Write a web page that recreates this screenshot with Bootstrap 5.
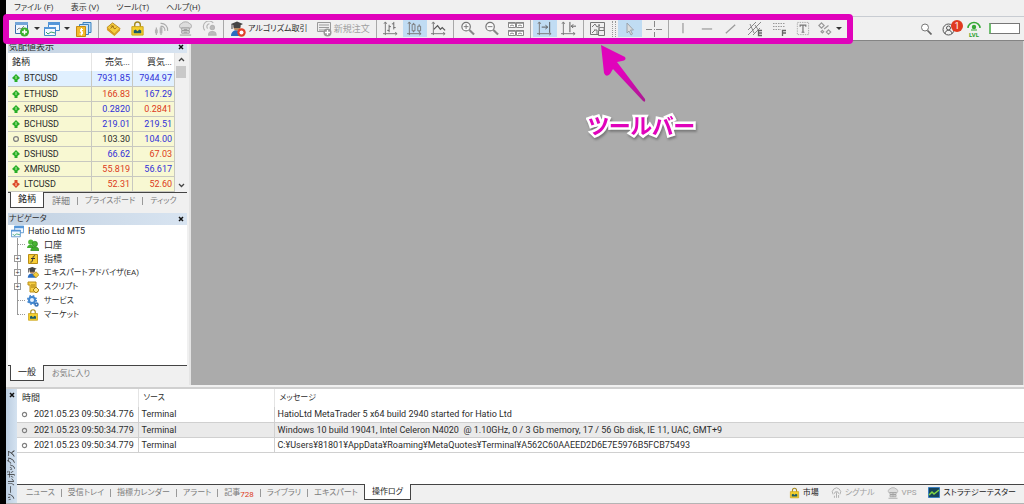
<!DOCTYPE html>
<html lang="ja">
<head>
<meta charset="utf-8">
<meta name="viewport" content="width=device-width, initial-scale=1">
<title>Hatio Ltd MT5</title>
<link href="https://cdn.jsdelivr.net/npm/bootstrap@5.3.0/dist/css/bootstrap.min.css" rel="stylesheet">
<style>
:root{--line:#d0d0d0;--mag:#e003bb}
body{font-family:Roboto,"Noto Sans CJK JP",sans-serif;font-size:9px;line-height:14px;color:#2c2c2c;background:#000;font-feature-settings:"palt";padding-left:6px}
button,input{font:inherit;color:inherit;font-feature-settings:inherit}
svg{display:block;flex:none}
.frame{min-height:100vh;background:#f0f0f0}
.kana{font-size:8px!important}
.menubar{height:16px;padding-left:8px;gap:17px}
.menubar a{color:#333;text-decoration:none}
.toolbar{height:25px;border-top:1px solid #c8ccd2;border-bottom:1px solid #848484}
.tools{padding-left:6px}
.tool{border:0;background:none;padding:0;width:24px;height:17px;display:flex;align-items:center;justify-content:center}
.tool.split{width:30px;gap:4px}
.tool.pressed{background:#c0dcf3}
.tool.labeled{width:auto;gap:2px;padding:0 4px;white-space:nowrap}
.dim{color:#a0a0a0}
.caret{width:0;border:3px solid transparent;border-top:3px solid #333;border-bottom:0}
.sep{width:1px;height:18px;background:#a8a8a8;margin:0 2px}
.grip{width:4px;height:16px;margin:0 2px;border-left:1px dotted #999;border-right:1px dotted #999}
.marker{left:3px;top:14px;width:850px;height:30px;border:6px solid var(--mag);border-radius:4px;pointer-events:none;z-index:3}
.status-tools{padding-right:4px}
.status-tools .tool{width:16px}
.count{left:9px;top:-2px;width:12px;height:12px;border-radius:6px;background:#e03a20;color:#fff;line-height:12px;text-align:center}
.quick{width:31px;height:11px;border:1px solid #777;border-left:2px solid #6fbf6f;background:#fff;padding:0 2px}
.side{width:185px;background:#f0f0f0;border-right:2px solid #e4e4e4;padding:0 2px 2px}
.canvas{background:#ababab;border-right:1px solid #d8d8d8}
.caption{height:12px;background:linear-gradient(90deg,#c3d2e2,#d8e4f1);font-size:9px;line-height:12px;padding:0 1px;font-weight:400}
.cls{border:0;background:none;padding:0;width:10px;height:10px;display:grid;place-items:center}
.pane{background:#fff}
table{border-collapse:collapse;width:100%;table-layout:fixed}
td,th{padding:0;font-weight:400;white-space:nowrap}
.quotes th{height:18px;border-right:1px solid #e4e4e4}
.quotes td{height:15px;line-height:14px;border-right:1px solid #c8c8c0;border-bottom:1px solid #c8c8c0;background:#f8f8d2}
.quotes tr.sel td{background:#e0f0ff}
.quotes th:not(:first-child),.quotes td:not(:first-child){text-align:right;padding-right:2px}
.quotes td:first-child,.quotes th:first-child{padding-left:4px}
.quotes td:first-child svg{display:inline-block;margin-right:4px;vertical-align:-1px}
.quotes .b{color:#3030d8}.r,.quotes .r{color:#dc3a20}
.scroller{width:12px;background:#f0f0f0}
.thumb{width:10px;height:12px;background:#c9c9c9}
.tabs{border-top:1px solid #444;height:17px;color:#7c7c7c;padding-left:2px}
.tabs button{border:0;background:none;padding:0 7px;height:14px;line-height:14px;white-space:nowrap}
.tabs button+button:not(.on){border-left:1px solid #999;height:8px;line-height:8px}
.tabs .on+button:not(.on){border-left-color:transparent}
.tabs button.on{background:#fff;color:#222;border:1px solid #444;border-top:0;height:16px;margin-top:-1px;align-self:flex-start}
.tabs.bottom{height:19px;padding-left:3px;padding-bottom:3px}
.tabs.bottom .strip{height:15px}
.tabs.bottom button{padding:0 6px}
.tabs.bottom button.on{padding:0 7px}
.tabs sub{font-size:8px;bottom:-2px;line-height:1}
.tree{margin:0;padding:0 0 0 3px;list-style:none;height:140px}
.tree li{display:flex;align-items:center;height:14px;gap:5px}
.tree .root{height:13px;gap:4px}
.kids{list-style:none;margin:0 0 0 6px;padding:0;background:linear-gradient(#999,#999) 0 0/1px 77px no-repeat}
.kids li::before{content:"";width:8px;border-top:1px dotted #999;flex:none;margin-right:-3px}
.kids li.more::before{content:"+";width:7px;height:7px;border:1px solid #999;background:#fff;font:7px/5px "Liberation Sans",sans-serif;text-align:center;margin:0 1px 0 -3px}
.dock{border-top:2px solid #d0d0d0;margin-top:2px;height:117px;border-bottom:1px solid #b4b4b4}
.spine{width:11px;background:linear-gradient(90deg,#bccee1,#d4e2f0);padding:1px 0 2px}
.spine span{writing-mode:vertical-rl;text-orientation:sideways;transform:rotate(180deg);line-height:11px;white-space:nowrap}
.log th{height:18px;padding-left:5px;border-right:1px solid #e4e4e4}
.log td{height:15px;line-height:14px;border-right:1px solid var(--line);border-bottom:1px solid var(--line);padding-left:3px;white-space:pre}
.log td:first-child{padding-left:4px}
.log td:first-child svg{display:inline-block;margin-right:6px}
.log tr.alt td{background:#eaeaea}
.log th:last-child,.log td:last-child{border-right:0}
.links{gap:12px}
.links a{color:#222;text-decoration:none;display:flex;align-items:center;gap:3px}
.links a.dim{color:#a0a0a0}
.note{left:588px;top:106px;font-family:"Noto Sans CJK JP",sans-serif;font-weight:700;font-size:22px;line-height:36px;color:var(--mag);-webkit-text-stroke:5px #fff;paint-order:stroke fill;filter:drop-shadow(1px 2px 1px #777);z-index:3;white-space:nowrap}
.pointer{left:596px;top:43px;z-index:3}
</style>
</head>
<body>
<svg width="0" height="0" class="position-absolute" fill="none">
<defs>
<linearGradient id="fade" x1="0" y1="0" x2="0" y2="1"><stop offset=".5" stop-color="#e003bb"/><stop offset="1" stop-color="#a81c90"/></linearGradient>
<symbol id="up" viewBox="0 0 8 8"><path d="M4 0 8 4 5.500 6V8h-3V6L0 4z" fill="#28ae28"/><path d="M4 2v3" stroke="#b8f0a0" stroke-width="1"/></symbol>
<symbol id="down" viewBox="0 0 8 8"><path d="M4 8 8 4 5.500 2.500V0h-3v2.500L0 4z" fill="#dc4a2a"/><path d="M4 3v3" stroke="#ffd0b0"/></symbol>
<symbol id="ring" viewBox="0 0 8 8"><circle cx="4" cy="4" r="2.400" fill="none" stroke="#808080" stroke-width="1.300"/></symbol>
<symbol id="x" viewBox="0 0 6 6"><path d="M1 1l4 4M5 1 1 5" stroke="#111" stroke-width="1.500"/></symbol>
<symbol id="bag" viewBox="0 0 16 16"><path d="M5 7V4a3 3 0 0 1 6 0v3" fill="none" stroke="#a58a20" stroke-width="1.500"/><path d="M2 6h12v9H2z" fill="#f4cf2c" stroke="#c9a21a"/><path d="M4 13v-3l2-1 2 2 2-2 2 1v3z" fill="#1c5c66"/></symbol>
<symbol id="signal" viewBox="0 0 16 16"><path d="M7 2.500a7 7 0 0 1 7.500 8M8 5.500a4 4 0 0 1 3.500 5M2.500 7v8M7.500 5v10" fill="none" stroke="#aaa" stroke-width="1.200"/><path d="M1 9h3v4H1zM6 7h3v6H6z" fill="#b4b4b4"/></symbol>
<symbol id="antenna" viewBox="0 0 16 16"><g fill="none" stroke="#aaa" stroke-width="1.300"><path d="M3 10a6 6 0 1 1 10 0M5 9a3 3 0 1 1 6 0M8 7v8M5 12v3M11 11v4"/></g></symbol>
<symbol id="cloud" viewBox="0 0 16 16"><path d="M2.500 7.500a3 3 0 0 1 1.500-5 4.500 3 0 0 1 8 0 3 3 0 0 1 1.500 5z" fill="#ddd" stroke="#aaa"/><path d="M4 7.500h8v2.500H4zM4 10.500h8V13H4z" fill="#eee" stroke="#999"/><path d="M2 15h12M6 9h4M6 12h4" stroke="#999"/></symbol>
<symbol id="person" viewBox="0 0 16 16"><g fill="none" stroke="#b4b4b4" stroke-width="1.200"><path d="M3 10a6 6 0 1 1 9-8M6 8a3 3 0 0 1 2-5"/><circle cx="11" cy="7" r="2.300" fill="#bbb"/><path d="M7 15c0-5 8-5 8 0z" fill="#bbb"/></g></symbol>
<symbol id="advisor" viewBox="0 0 16 16"><path d="M1 15c0-7 10-8 11 0z" fill="#2a6cc0"/><circle cx="7" cy="6" r="3.500" fill="#b48a62"/><path d="M1 3l6-2.500L13 3 7 6z" fill="#444"/><path d="M4 4h6v2.500H4zM2 3v5" fill="#444" stroke="#444"/></symbol>
<symbol id="chart" viewBox="0 0 16 16"><path d="M1.500 1.500h12v11h-12z" fill="#eef6ff" stroke="#3b6ea8"/><path d="M1 1h13v3H1z" fill="#73a5d8"/><path d="M3 9l2-2 2 1 3-3" stroke="#888" fill="none"/><circle cx="10.500" cy="11" r="4.500" fill="#3bb02e"/><path d="M8 11h5M10.500 8.500v5" stroke="#fff" stroke-width="1.500"/></symbol>
<symbol id="windows" viewBox="0 0 16 16"><path d="M4.500 1.500h11v8h-11z" fill="#f3f9ff" stroke="#4a8bc8"/><path d="M4 1h12v3H4z" fill="#5596d8"/><path d="M.500 6.500h11v8H.500z" fill="#f3f9ff" stroke="#4a8bc8"/><path d="M0 6h12v2H0z" fill="#5596d8"/><path d="M2 11l2 2 3-2 4 1" stroke="#35a06c" fill="none"/></symbol>
<symbol id="purse" viewBox="0 0 16 16"><path d="M7 1.500h8v10H7z" fill="#b9daf5" stroke="#3c82bf"/><path d="M3.500 3.500h9v10h-9z" fill="#cae4f8" stroke="#3c82bf"/><path d="M.500 5.500h9v10h-9z" fill="#f2bb2c" stroke="#c58a12"/><path d="M7 8.500H4.500v2H6.500V13H3.500M5.500 7v7.500" stroke="#fff" fill="none"/></symbol>
<symbol id="book" viewBox="0 0 16 16"><path d="M1 7l6-5 8 6-6 6z" fill="#f5cd3c" stroke="#b8861a"/><path d="M1 7l8 7v2L1 9.500zM9 14l6-6v2l-6 6z" fill="#d99a20"/><path d="M5 6c2-2 3 0 3 1s2 2 3 0M5 8l3-3" stroke="#8a5c10" fill="none"/></symbol>
<symbol id="order" viewBox="0 0 16 16"><path d="M1.500 1.500h13v9h-13z" fill="#eee" stroke="#999"/><path d="M3 4h10M3 6.500h10M3 9h6" stroke="#999"/><circle cx="11.500" cy="11.500" r="4" fill="#999"/><path d="M9 11.500h5M11.500 9v5" stroke="#fff" stroke-width="1.300"/></symbol>
<symbol id="axes" viewBox="0 0 16 16"><path d="M2.500 1v14M0 13.500h15M1 3l1.500-2L4 3M13 12l2 1.500L13 15" stroke="#777" fill="none"/></symbol>
<symbol id="zoom" viewBox="0 0 16 16"><circle cx="6.500" cy="6" r="4.500" fill="#fafafa" stroke="#777" stroke-width="1.300"/><path d="M10 9.500l5 5" stroke="#888" stroke-width="2.200"/><path d="M4 6h5" stroke="#777"/></symbol>
<symbol id="group" viewBox="0 0 16 16"><circle cx="5" cy="4" r="3.500" fill="#4fbb38"/><path d="M0 12c0-6 9-6 9 0z" fill="#3fae2c"/><circle cx="10.500" cy="6.500" r="3.500" fill="#48b433" stroke="#277b1c" stroke-width=".800"/><path d="M5 15.500c0-7 11-7 11 0z" fill="#3fae2c" stroke="#257b19" stroke-width=".800"/></symbol>
</defs>
</svg>

<div class="frame d-flex flex-column">
<nav class="menubar kana d-flex align-items-center"><a href="#">ファイル (F)</a><a href="#">表示 (V)</a><a href="#">ツール(T)</a><a href="#">ヘルプ(H)</a></nav>

<header class="toolbar d-flex align-items-center justify-content-between">
<div class="tools d-flex align-items-center">
<button class="tool split" aria-label="新規チャート"><svg width="16" height="16"><use href="#chart"/></svg><i class="caret"></i></button>
<button class="tool split" aria-label="チャート一覧"><svg width="16" height="16"><use href="#windows"/></svg><i class="caret"></i></button>
<button class="tool" aria-label="銘柄"><svg width="16" height="16"><use href="#purse"/></svg></button>
<span class="sep"></span>
<button class="tool" aria-label="履歴"><svg width="15" height="15"><use href="#book"/></svg></button>
<button class="tool" aria-label="マーケット"><svg width="15" height="15"><use href="#bag"/></svg></button>
<button class="tool" aria-label="シグナル"><svg width="15" height="15"><use href="#signal"/></svg></button>
<button class="tool" aria-label="VPS"><svg width="15" height="15"><use href="#cloud"/></svg></button>
<button class="tool" aria-label="コミュニティ"><svg width="15" height="15"><use href="#person"/></svg></button>
<span class="sep"></span>
<button class="tool labeled kana"><svg width="16" height="16" viewBox="0 0 16 16"><use href="#advisor"/><circle cx="11.500" cy="11.500" r="4.200" fill="#e0402a"/><circle cx="11.500" cy="11.500" r="2" fill="#fff"/></svg>アルゴリズム取引</button>
<button class="tool labeled dim"><svg width="16" height="16"><use href="#order"/></svg>新規注文</button>
<span class="sep"></span>
<button class="tool" aria-label="バー"><svg width="15" height="15" viewBox="0 0 16 16"><use href="#axes"/><path d="M6.500 4v8M4.500 10h2M6.500 6h2M11.500 1v8M9.500 3h2M11.500 7h2" stroke="#666"/></svg></button>
<button class="tool pressed" aria-label="ローソク足"><svg width="15" height="15" viewBox="0 0 16 16"><use href="#axes"/><path d="M5.500 3.500h3v7h-3zM11.500 5.500h3v5h-3zM7 2v1.500M7 10.500V12M13 3.500v2M13 10.500V12" stroke="#777" fill="none"/></svg></button>
<button class="tool" aria-label="ライン"><svg width="15" height="15" viewBox="0 0 16 16"><use href="#axes"/><path d="M3 9l4-4 3 4 2-2 3 3" stroke="#555" fill="none" stroke-width="1.300"/></svg></button>
<span class="sep"></span>
<button class="tool" aria-label="拡大"><svg width="15" height="15" viewBox="0 0 16 16"><use href="#zoom"/><path d="M6.500 3.500v5" stroke="#777"/></svg></button>
<button class="tool" aria-label="縮小"><svg width="15" height="15"><use href="#zoom"/></svg></button>
<button class="tool" aria-label="整列"><svg width="16" height="16" viewBox="0 0 16 16"><path d="M.500 1.500h7v5h-7zM8.500 1.500h7v5h-7zM.500 9.500h7v5h-7zM8.500 9.500h7v5h-7z" fill="#fff" stroke="#888"/><path d="M0 2h7M8 2h8M0 10h7M8 10h8" stroke="#888" stroke-width="1.500"/><path d="M2 5l2-1 2 1M10 5l2-1 2 1M2 13l2-1 2 1M10 13l2-1 2 1" stroke="#888" fill="none"/></svg></button>
<span class="sep"></span>
<button class="tool pressed" aria-label="自動スクロール"><svg width="15" height="15" viewBox="0 0 16 16"><use href="#axes"/><path d="M13.500 1v11M5 6.500h6M9 4.500l2.500 2L9 8.500" stroke="#555" fill="none"/></svg></button>
<button class="tool" aria-label="チャートシフト"><svg width="15" height="15" viewBox="0 0 16 16"><use href="#axes"/><path d="M9.500 1v11M11 5.500h5M13 3.500l-2 2 2 2" stroke="#555" fill="none"/></svg></button>
<span class="sep"></span>
<button class="tool" aria-label="テンプレート"><svg width="17" height="16" viewBox="0 0 17 16"><path d="M1.500 1.500h14v12h-14zM3 6l3-3 2 3 3-2M3 12l3-3M5 9h3v5M10 3v6" fill="none" stroke="#777"/><path d="M9.500 9.500h6v5h-6z" fill="#eee" stroke="#777"/><path d="M10 9V6.500h5V9" fill="none" stroke="#888"/></svg></button>
<span class="grip"></span>
<button class="tool pressed" aria-label="カーソル"><svg width="12" height="14" viewBox="0 0 12 14"><path d="M3 1v10l2-2 2 4 1.500-1-2-4h3z" fill="#ddd" stroke="#9aa3ac"/></svg></button>
<button class="tool" aria-label="十字線"><svg width="16" height="16" viewBox="0 0 16 16"><path d="M0 8.500h6M10 8.500h6M8.500 0v6M8.500 11v5M8 8.500h1" stroke="#888"/></svg></button>
<span class="sep"></span>
<button class="tool" aria-label="垂直線"><svg width="15" height="15" viewBox="0 0 16 16"><path d="M8.500 2v11" stroke="#999" stroke-width="1.300"/></svg></button>
<button class="tool" aria-label="水平線"><svg width="15" height="15" viewBox="0 0 16 16"><path d="M3 8.500h11" stroke="#999" stroke-width="1.300"/></svg></button>
<button class="tool" aria-label="トレンドライン"><svg width="15" height="15" viewBox="0 0 16 16"><path d="M3 13l10-9" stroke="#999" stroke-width="1.300"/></svg></button>
<button class="tool" aria-label="チャネル"><svg width="16" height="16" viewBox="0 0 16 16"><path d="M1 9l8-8M1 14 14 1M6 14l7-7M3 3l4 9M8 4l4 6" stroke="#888" fill="none"/><path d="M15 9.500h-3.500v5H15M11.500 12H15" stroke="#666" stroke-width="1.300" fill="none"/></svg></button>
<button class="tool" aria-label="フィボナッチ"><svg width="16" height="16" viewBox="0 0 16 16"><path d="M2 2.500h12M2 5.500h12M2 8.500h8" stroke="#999" stroke-dasharray="1.500 1"/><path d="M11.500 15V9.500H15M11.500 12H15" stroke="#666" stroke-width="1.300" fill="none"/></svg></button>
<button class="tool" aria-label="テキスト"><svg width="15" height="15" viewBox="0 0 16 16"><path d="M2.500 1.500h12v13h-12z" stroke="#aaa" stroke-dasharray="1.500 1" fill="none"/><path d="M5.500 6V4.500h6V6M8.500 5v7M7 12h3" stroke="#777" stroke-width="1.300" fill="none"/></svg></button>
<button class="tool split" aria-label="オブジェクト"><svg width="14" height="14" viewBox="0 0 16 16"><path d="M4 1l3 3-3 3-3-3zM12 9l2.500 2.500L12 14l-2.500-2.500zM5 9.500l1.500 1.500L5 12.500 3.500 11zM7 8l5-4" stroke="#999" stroke-width="1.400" fill="none"/></svg><i class="caret"></i></button>
</div>
<div class="status-tools d-flex align-items-center gap-2">
<button class="tool" aria-label="検索"><svg width="12" height="12" viewBox="0 0 12 12"><circle cx="5" cy="4.500" r="3.500" fill="#fff" stroke="#777"/><path d="M7.500 7.500l4 4" stroke="#666" stroke-width="1.700"/></svg></button>
<button class="border-0 bg-transparent p-0 position-relative me-1" aria-label="アカウント"><svg width="13" height="14" viewBox="0 0 13 14"><circle cx="6.500" cy="7.500" r="5.500" fill="none" stroke="#555"/><circle cx="6.500" cy="6" r="2" fill="none" stroke="#555"/><path d="M3 12c0-5 7-5 7 0" fill="none" stroke="#555"/></svg><span class="count position-absolute">1</span></button>
<svg width="14" height="16" viewBox="0 0 14 16" role="img" aria-label="LVL"><path d="M1 7a6 5.500 0 0 1 12 0" fill="none" stroke="#35a835" stroke-width="1.500"/><circle cx="7" cy="6" r="2.200" fill="#35a835"/><path d="M4 9h6" stroke="#35a835"/><text x="7" y="15.500" font-size="6" font-weight="700" text-anchor="middle" fill="#2da02d">LVL</text></svg>
<input class="quick" type="text" aria-label="クイック入力">
</div>
</header>

<main class="d-flex flex-grow-1">
<aside class="side flex-shrink-0">
<section class="mb-1">
<h2 class="caption m-0 d-flex justify-content-between align-items-center">気配値表示<button class="cls" aria-label="閉じる"><svg width="6" height="6"><use href="#x"/></svg></button></h2>
<div class="pane d-flex">
<table class="quotes">
<colgroup><col><col style="width:41px"><col style="width:42px"></colgroup>
<thead><tr><th>銘柄</th><th>売気...</th><th>買気...</th></tr></thead>
<tbody>
<tr class="sel"><td><svg width="8" height="8"><use href="#up"/></svg>BTCUSD</td><td class="b">7931.85</td><td class="b">7944.97</td></tr>
<tr><td><svg width="8" height="8"><use href="#up"/></svg>ETHUSD</td><td class="r">166.83</td><td class="b">167.29</td></tr>
<tr><td><svg width="8" height="8"><use href="#up"/></svg>XRPUSD</td><td class="b">0.2820</td><td class="r">0.2841</td></tr>
<tr><td><svg width="8" height="8"><use href="#up"/></svg>BCHUSD</td><td class="b">219.01</td><td class="b">219.51</td></tr>
<tr><td><svg width="8" height="8"><use href="#ring"/></svg>BSVUSD</td><td>103.30</td><td class="b">104.00</td></tr>
<tr><td><svg width="8" height="8"><use href="#up"/></svg>DSHUSD</td><td class="b">66.62</td><td class="r">67.03</td></tr>
<tr><td><svg width="8" height="8"><use href="#up"/></svg>XMRUSD</td><td class="r">55.819</td><td class="b">56.617</td></tr>
<tr><td><svg width="8" height="8"><use href="#down"/></svg>LTCUSD</td><td class="r">52.31</td><td class="r">52.60</td></tr>
</tbody>
</table>
<div class="scroller flex-shrink-0 d-flex flex-column align-items-center py-1"><svg width="7" height="5" viewBox="0 0 7 5"><path d="M1 4l2.500-2.500L6 4" stroke="#444" stroke-width="1.300" fill="none"/></svg><span class="thumb mt-1"></span><svg class="mt-auto" width="7" height="5" viewBox="0 0 7 5"><path d="M1 1l2.500 2.500L6 1" stroke="#444" stroke-width="1.300" fill="none"/></svg></div>
</div>
<div class="tabs d-flex align-items-center"><button class="on">銘柄</button><button>詳細</button><button class="kana">プライスボード</button><button class="kana">ティック</button></div>
</section>
<section>
<h2 class="caption kana m-0 d-flex justify-content-between align-items-center">ナビゲータ<button class="cls" aria-label="閉じる"><svg width="6" height="6"><use href="#x"/></svg></button></h2>
<div class="pane">
<ul class="tree">
<li class="root"><svg width="13" height="13"><use href="#windows"/></svg>Hatio Ltd MT5</li>
<li class="d-block h-auto"><ul class="kids">
<li><svg width="12" height="12"><use href="#group"/></svg>口座</li>
<li class="more"><svg width="12" height="12" viewBox="0 0 12 12"><path d="M1.500 1.500h9v9h-9z" fill="#f9ce35" stroke="#b98c15"/><path d="M8 3c-2-1-2 2-2.500 4S4 10 3.500 9M4 5.500h4" stroke="#333" fill="none"/></svg>指標</li>
<li class="more kana"><svg width="12" height="13" viewBox="0 0 16 16"><use href="#advisor"/><path d="M12 7l4 4-4 4-4-4z" fill="#f4cc3a" stroke="#a88214"/></svg>エキスパートアドバイザ(EA)</li>
<li class="more kana"><svg width="12" height="12" viewBox="0 0 12 12"><path d="M1 1h8v7h2v3H3V4H1z" fill="#f6cf43" stroke="#bd9018"/><path d="M4 4h4M4 6h4" stroke="#a87c10"/><path d="M9 6l3 3-3 3-3-3z" fill="#ffe580" stroke="#a88214"/></svg>スクリプト</li>
<li class="kana"><svg width="12" height="12" viewBox="0 0 12 12"><circle cx="5" cy="5" r="3" fill="#e5f1ff" stroke="#4186cf" stroke-width="2"/><circle cx="5" cy="5" r="4.300" fill="none" stroke="#4186cf" stroke-width="1.500" stroke-dasharray="1.700"/><circle cx="9.500" cy="9.500" r="1.500" fill="#e5f1ff" stroke="#3671b5" stroke-width="1.500"/></svg>サービス</li>
<li class="kana"><svg width="12" height="12"><use href="#bag"/></svg>マーケット</li>
</ul></li>
</ul>
</div>
<div class="tabs d-flex align-items-center"><button class="on">一般</button><button class="kana">お気に入り</button></div>
</section>
</aside>
<div class="canvas flex-grow-1"></div>
</main>

<footer class="dock d-flex">
<div class="spine flex-shrink-0 d-flex flex-column justify-content-between align-items-center"><button class="cls" aria-label="閉じる"><svg width="6" height="6"><use href="#x"/></svg></button><span class="kana">ツールボックス</span></div>
<div class="flex-grow-1 d-flex flex-column">
<div class="pane flex-grow-1">
<table class="log">
<colgroup><col style="width:121px"><col style="width:136px"><col></colgroup>
<thead><tr><th>時間</th><th class="kana">ソース</th><th class="kana">メッセージ</th></tr></thead>
<tbody>
<tr><td><svg width="7" height="7"><use href="#ring"/></svg>2021.05.23 09:50:34.776</td><td>Terminal</td><td>HatioLtd MetaTrader 5 x64 build 2940 started for Hatio Ltd</td></tr>
<tr class="alt"><td><svg width="7" height="7"><use href="#ring"/></svg>2021.05.23 09:50:34.779</td><td>Terminal</td><td>Windows 10 build 19041, Intel Celeron N4020  @ 1.10GHz, 0 / 3 Gb memory, 17 / 56 Gb disk, IE 11, UAC, GMT+9</td></tr>
<tr><td><svg width="7" height="7"><use href="#ring"/></svg>2021.05.23 09:50:34.779</td><td>Terminal</td><td>C:¥Users¥81801¥AppData¥Roaming¥MetaQuotes¥Terminal¥A562C60AAEED2D6E7E5976B5FCB75493</td></tr>
</tbody>
</table>
</div>
<div class="tabs bottom kana d-flex align-items-center justify-content-between">
<div class="strip d-flex align-items-center"><button>ニュース</button><button>受信トレイ</button><button>指標カレンダー</button><button>アラート</button><button>記事<sub class="r">728</sub></button><button>ライブラリ</button><button>エキスパート</button><button class="on">操作ログ</button></div>
<div class="links d-flex align-items-center pe-2"><a href="#"><svg width="11" height="12"><use href="#bag"/></svg>市場</a><a class="dim" href="#"><svg width="11" height="12"><use href="#antenna"/></svg>シグナル</a><a class="dim" href="#"><svg width="12" height="12"><use href="#cloud"/></svg>VPS</a><a href="#"><svg width="12" height="11" viewBox="0 0 12 11"><path d="M.500.500h11v10H.500z" fill="#15435a" stroke="#3a7fc0"/><path d="M1 8l3-3 2 2 5-4" stroke="#7fd645" stroke-width="1.500" fill="none"/></svg>ストラテジーテスター</a></div>
</div>
</div>
</footer>
</div>

<div class="marker position-absolute"></div>
<svg class="pointer position-absolute" width="52" height="60" viewBox="0 0 52 60"><path d="M5 2 29 14q2 3-3 4l-5 1L49 56q1 4-2 2L17 26l-3 5q-4 4-6-1z" fill="url(#fade)"/></svg>
<div class="note position-absolute">ツールバー</div>
<script src="https://cdn.jsdelivr.net/npm/bootstrap@5.3.0/dist/js/bootstrap.bundle.min.js"></script>
</body>
</html>
